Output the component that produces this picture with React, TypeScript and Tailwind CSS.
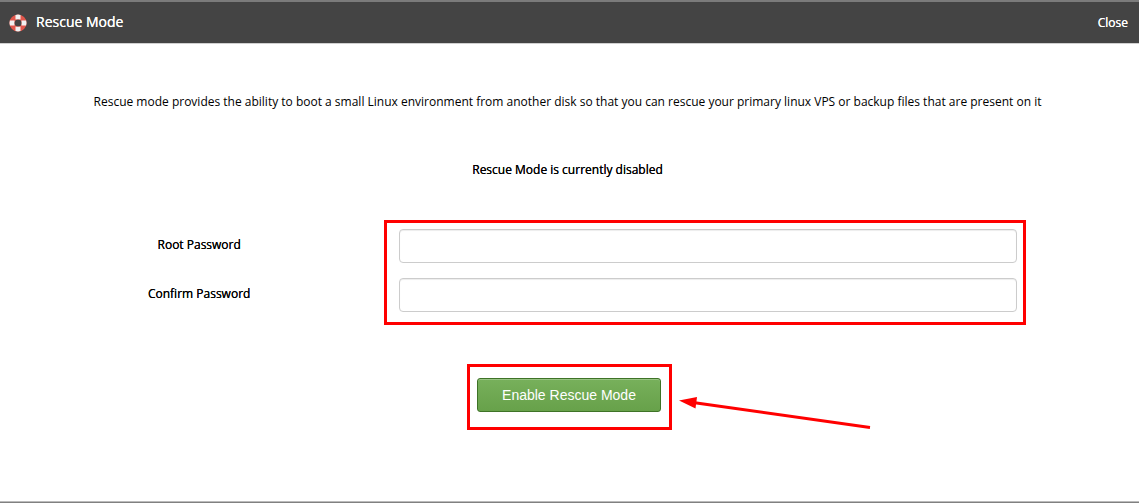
import React from "react";

function LifebuoyIcon() {
  return (
    <svg viewBox="0 0 18 18" className="h-[18px] w-[18px]" aria-hidden="true">
      <circle cx="9" cy="9" r="6.1" fill="none" stroke="#e2574c" strokeWidth="5" />
      <g fill="#f1f1f1">
        <path d="M6.5 0.9q2.5-0.8 5 0v4.7q-2.5-0.7-5 0z" />
        <path d="M6.5 12.4q2.5 0.7 5 0v4.7q-2.5 0.8-5 0z" />
        <path d="M0.9 6.5h4.7q-0.7 2.5 0 5H0.9q-0.8-2.5 0-5z" />
        <path d="M12.4 6.5h4.7q0.8 2.5 0 5h-4.7q0.7-2.5 0-5z" />
      </g>
    </svg>
  );
}

function PasswordRow({ id, label }: { id: string; label: string }) {
  return (
    <div className="grid grid-cols-12">
      <label
        htmlFor={id}
        className="col-span-4 pt-1.5 text-center text-[12px] leading-[20px] font-medium [text-shadow:0_0_0_#000]"
      >
        {label}
      </label>
      <div className="col-span-7 px-[15px]">
        <input
          id={id}
          type="password"
          className="block h-[34px] w-full rounded border border-[#ccc] bg-white px-3 text-[14px] shadow-[inset_0_1px_1px_rgba(0,0,0,0.075)] outline-none"
        />
      </div>
    </div>
  );
}

export default function App() {
  return (
    <div className="border-t-2 border-[#7b7b7b] bg-white font-['Open_Sans',sans-serif] text-black">
      <header className="flex h-[42px] items-center justify-between border-b border-[#d0d0d0] bg-[#444] pr-[11px] pl-[9px] text-white">
        <div className="flex items-center gap-[9px]">
          <LifebuoyIcon />
          <h1 className="pb-0.5 text-[14px] leading-[20px] font-medium [text-shadow:0_0_0_#fff]">Rescue Mode</h1>
        </div>
        <button type="button" className="text-[12px] leading-[20px] [text-shadow:0_0_0_#fff]">Close</button>
      </header>

      <main className="border-b border-[#bbb] px-3.5 pb-[89px]">
        <div className="pr-1 text-center text-[12px] leading-[20px]">
          <p className="pt-12">
            Rescue mode provides the ability to boot a small Linux environment from another disk so that you can rescue
            your primary linux VPS or backup files that are present on it
          </p>
          <p className="pt-12 font-medium [text-shadow:0_0_0_#000]">Rescue Mode is currently disabled</p>
        </div>

        <form onSubmit={(e) => e.preventDefault()}>
          <div className="relative mt-[49px] flex flex-col gap-[15px]">
            <PasswordRow id="root-password" label="Root Password" />
            <PasswordRow id="confirm-password" label="Confirm Password" />
            <div className="pointer-events-none absolute inset-x-0 -top-[9px] -bottom-[13px] grid grid-cols-12">
              <div className="col-span-7 col-start-5 mr-1.5 border-3 border-[#f00]" />
            </div>
          </div>

          <div className="mt-[66px] flex justify-center pr-px">
            <div className="relative">
              <button
                type="submit"
                className="block h-[34px] w-46 rounded-[3px] border border-[#3e7327] bg-linear-to-b from-[#77b05b] to-[#67a14a] font-['Liberation_Sans',Arial,sans-serif] text-[14px] leading-[20px] text-white shadow-[inset_0_1px_0_rgba(255,255,255,0.25)]"
              >
                Enable Rescue Mode
              </button>
              <div className="pointer-events-none absolute -top-3.5 -right-[11px] -bottom-[18px] -left-2.5 border-3 border-[#f00]" />
              <svg
                viewBox="0 0 192 34"
                className="pointer-events-none absolute top-[17px] left-full ml-[18px] h-[34px] w-48"
                aria-hidden="true"
              >
                <path d="M14 7.5L191 32.5" stroke="#f00" strokeWidth="3" />
                <path d="M0 5.5L18 2L16.5 13.5z" fill="#f00" />
              </svg>
            </div>
          </div>
        </form>
      </main>
      <footer className="h-px bg-[#808080]" />
    </div>
  );
}
